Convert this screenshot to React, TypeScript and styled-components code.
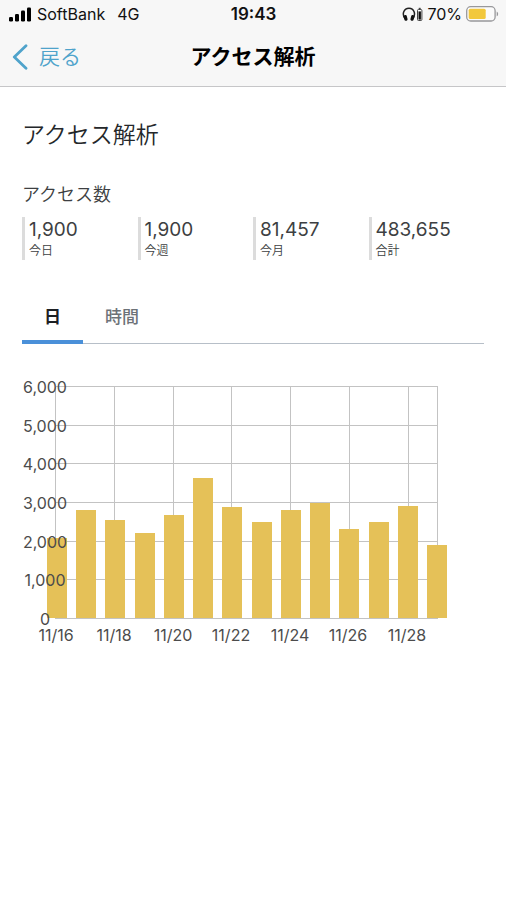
import React, { useState } from "react";
import styled, { createGlobalStyle } from "styled-components";

const GlobalStyle = createGlobalStyle`
  *, *::before, *::after { box-sizing: border-box; }
  body {
    margin: 0;
    background: #fff;
    color: #3d3f42;
    font-family: Inter, "Noto Sans CJK JP", sans-serif;
  }
  h1, h2, h3, dl, dt, dd { margin: 0; font-weight: 400; }
  button { font: inherit; background: none; border: 0; padding: 0; cursor: pointer; }
`;

const Header = styled.header`
  background: #f7f7f7;
  border-bottom: 1px solid #c6c6c8;
`;

const StatusBar = styled.div`
  display: grid;
  grid-template-columns: 1fr auto 1fr;
  align-items: center;
  height: 28px;
  padding: 0 7px 0 8px;
  color: #111;
  font-size: 16px;
  line-height: 20px;
`;

const StatusGroup = styled.div<{ $end?: boolean }>`
  display: flex;
  align-items: center;
  justify-content: ${(p) => (p.$end ? "flex-end" : "flex-start")};
  gap: ${(p) => (p.$end ? "4px" : "6px")};
`;

const Network = styled.span`
  margin-left: 6px;
`;

const Clock = styled.time`
  font-size: 17px;
  font-weight: 600;
`;

const NavBar = styled.nav`
  display: grid;
  grid-template-columns: 1fr auto 1fr;
  align-items: center;
  height: 58px;
  padding: 0 12px;
`;

const BackButton = styled.button`
  && {
    display: flex;
    align-items: center;
    justify-self: start;
    gap: 11px;
    color: #4fa3cb;
    font-size: 21px;
    font-weight: 350;
    line-height: 28px;
  }
`;

const NavTitle = styled.h1`
  && {
    color: #000;
    font-size: 21px;
    font-weight: 700;
    line-height: 28px;
  }
`;

const Content = styled.main`
  padding: 32px 22px;
`;

const Heading = styled.h2`
  && {
    color: #24272a;
    font-size: 23px;
    font-weight: 350;
    line-height: 32px;
  }
`;

const SubHeading = styled.h3`
  && {
    margin-top: 30px;
    font-size: 18px;
    font-weight: 350;
    line-height: 28px;
  }
`;

const Stats = styled.dl`
  display: grid;
  grid-template-columns: repeat(4, 1fr);
  margin-top: 8px;
`;

const Stat = styled.div`
  display: flex;
  flex-direction: column-reverse;
  height: 43px;
  padding-left: 4px;
  border-left: 3px solid #dcdcdc;
`;

const StatLabel = styled.dt`
  font-size: 12px;
  font-weight: 350;
  line-height: 18px;
`;

const StatValue = styled.dd`
  font-size: 19px;
  line-height: 25px;
`;

const Tabs = styled.div`
  display: flex;
  height: 54px;
  margin-top: 30px;
  border-bottom: 1px solid #b7bfc8;
`;

const Tab = styled.button<{ $active: boolean }>`
  && {
    height: 54px;
    padding: 0 22px;
    border-bottom: 4px solid ${(p) => (p.$active ? "#4a90d9" : "transparent")};
    color: ${(p) => (p.$active ? "#1d2024" : "#6d7278")};
    font-size: 17px;
    font-weight: ${(p) => (p.$active ? 700 : 500)};
  }
`;

const Chart = styled.svg`
  display: block;
  width: 100%;
  height: auto;
  margin-top: 32px;

  text {
    fill: #4c4c4c;
    font-size: 16px;
    text-anchor: middle;
  }
`;

const stats = [
  { value: "1,900", label: "今日" },
  { value: "1,900", label: "今週" },
  { value: "81,457", label: "今月" },
  { value: "483,655", label: "合計" },
];

const daily = [2070, 2795, 2535, 2210, 2665, 3615, 2865, 2495, 2785, 2985, 2290, 2490, 2895, 1885];
const ticks = [0, 1000, 2000, 3000, 4000, 5000, 6000];

const plot = { left: 34, right: 416, top: 11, bottom: 243 };
const xAt = (day: number) =>
  plot.left + Math.round((day * (plot.right - plot.left)) / (daily.length - 1));
const yAt = (value: number) =>
  plot.bottom - Math.round((value * (plot.bottom - plot.top)) / 6000);
const barX = (day: number) => 25 + Math.round((day * 380) / (daily.length - 1));

function SignalIcon() {
  return (
    <svg width="23" height="15" viewBox="0 0 23 15" fill="#000" aria-hidden="true">
      <rect x="1" y="10" width="4" height="4.5" rx="1.2" />
      <rect x="7" y="7" width="4" height="7.5" rx="1.2" />
      <rect x="13" y="3.5" width="4" height="11" rx="1.2" />
      <rect x="19" y="0.5" width="4" height="14" rx="1.2" />
    </svg>
  );
}

function HeadphonesIcon() {
  return (
    <svg width="21" height="15" viewBox="0 0 21 15" aria-hidden="true">
      <path d="M3.2 11.8C-.7 7 2 1.3 7 1.3S14.3 7 10.8 11.8" fill="none" stroke="#222" strokeWidth="1.5" />
      <rect x="2" y="8" width="3.2" height="5.8" rx="1.3" transform="rotate(-14 3.6 10.9)" fill="#111" />
      <rect x="8.8" y="8" width="3.2" height="5.8" rx="1.3" transform="rotate(14 10.4 10.9)" fill="#111" />
      <rect x="15.5" y="2.5" width="4.4" height="11" rx="1" fill="#fff" stroke="#444" />
      <rect x="16.5" y="4.4" width="2.4" height="8.2" fill="#111" />
      <rect x="16.7" y="0.8" width="2" height="1.4" fill="#444" />
    </svg>
  );
}

function BatteryIcon() {
  return (
    <svg width="33" height="16" viewBox="0 0 33 16" aria-hidden="true">
      <rect x="0.7" y="0.7" width="28.4" height="14.3" rx="4" fill="#fbfbfb" stroke="#98989b" strokeWidth="1.3" />
      <rect x="2.7" y="2.7" width="17" height="10.3" rx="1.6" fill="#f2c83c" />
      <path d="M30.7 5.4c1.9.8 1.9 4.1 0 4.9z" fill="#98989b" />
    </svg>
  );
}

function BackIcon() {
  return (
    <svg width="16" height="26" viewBox="0 0 16 26" fill="none" aria-hidden="true">
      <path d="M14 1.8 2.3 13 14 24.2" stroke="#4fa3cb" strokeWidth="2.8" strokeLinecap="round" strokeLinejoin="round" />
    </svg>
  );
}

function AccessChart() {
  return (
    <Chart viewBox="0 0 462 270" role="img" aria-label="アクセス数">
      <g stroke="#c3c3c3">
        {ticks.map((tick) => (
          <line key={tick} x1={plot.left} x2={plot.right} y1={yAt(tick) - 0.5} y2={yAt(tick) - 0.5} />
        ))}
        {daily.map((_, day) =>
          day % 2 === 0 || day === daily.length - 1 ? (
            <line key={day} x1={xAt(day) - 0.5} x2={xAt(day) - 0.5} y1={plot.top} y2={plot.bottom} />
          ) : null
        )}
      </g>
      <g fill="#e5c158">
        {daily.map((value, day) => (
          <rect key={day} x={barX(day)} y={yAt(value) - 1} width="20" height={plot.bottom - yAt(value)} />
        ))}
      </g>
      {ticks.map((tick) => (
        <text key={tick} x="23" y={yAt(tick) + 6}>
          {tick.toLocaleString("en-US")}
        </text>
      ))}
      {daily.map((_, day) =>
        day % 2 === 0 && day < daily.length - 1 ? (
          <text key={day} x={barX(day) + 9} y="265">
            {`11/${16 + day}`}
          </text>
        ) : null
      )}
    </Chart>
  );
}

export default function App() {
  const [tab, setTab] = useState("日");
  return (
    <>
      <GlobalStyle />
      <Header>
        <StatusBar>
          <StatusGroup>
            <SignalIcon />
            <span>SoftBank</span>
            <Network>4G</Network>
          </StatusGroup>
          <Clock>19:43</Clock>
          <StatusGroup $end>
            <HeadphonesIcon />
            <span>70%</span>
            <BatteryIcon />
          </StatusGroup>
        </StatusBar>
        <NavBar>
          <BackButton type="button">
            <BackIcon />
            戻る
          </BackButton>
          <NavTitle>アクセス解析</NavTitle>
        </NavBar>
      </Header>
      <Content>
        <Heading>アクセス解析</Heading>
        <SubHeading>アクセス数</SubHeading>
        <Stats>
          {stats.map((stat) => (
            <Stat key={stat.label}>
              <StatLabel>{stat.label}</StatLabel>
              <StatValue>{stat.value}</StatValue>
            </Stat>
          ))}
        </Stats>
        <Tabs role="tablist">
          {["日", "時間"].map((name) => (
            <Tab
              key={name}
              type="button"
              role="tab"
              aria-selected={tab === name}
              $active={tab === name}
              onClick={() => setTab(name)}
            >
              {name}
            </Tab>
          ))}
        </Tabs>
        <AccessChart />
      </Content>
    </>
  );
}
